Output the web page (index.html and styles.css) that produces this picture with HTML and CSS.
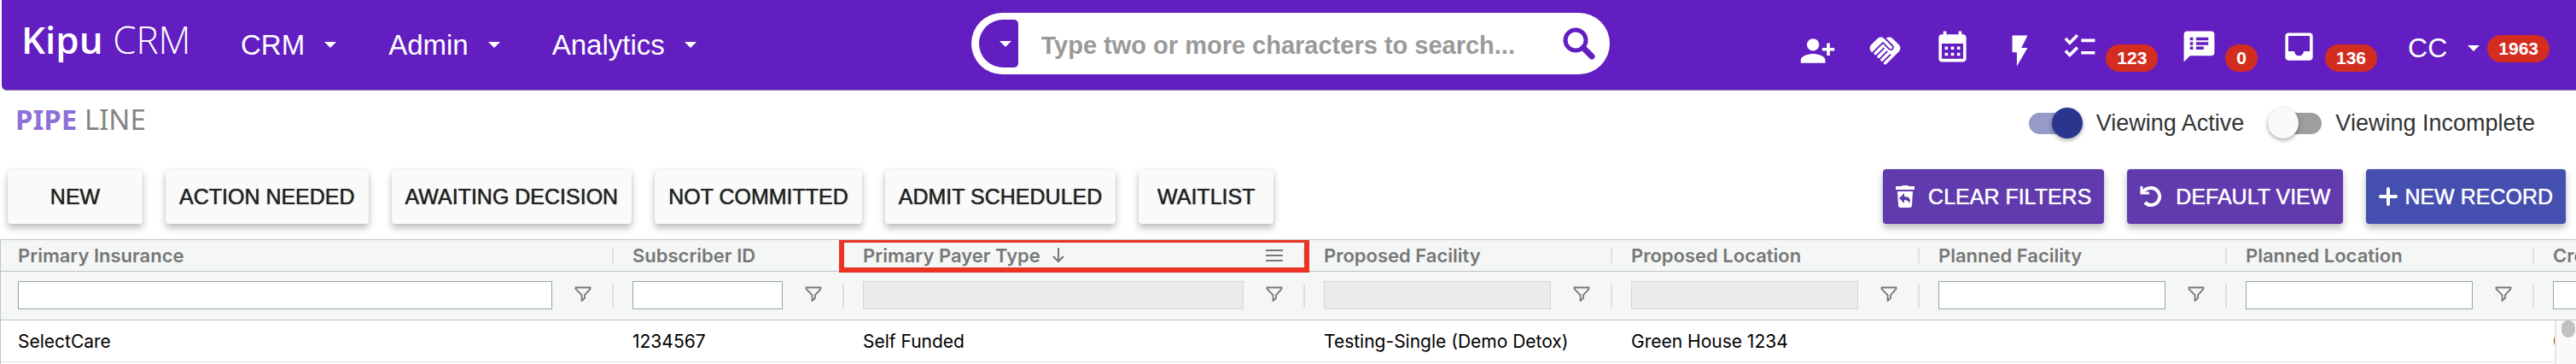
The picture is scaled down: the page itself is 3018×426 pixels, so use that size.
FILE: index.html
```html
<!DOCTYPE html>
<html lang="en">
<head>
    <meta charset="UTF-8">
    <meta name="viewport" content="width=device-width, initial-scale=1.0">
    <title>Kipu CRM - Pipeline</title>
    <link rel="stylesheet" href="styles.css">
</head>
<body>
    <svg class="sprite" aria-hidden="true">
        <symbol id="filter" viewBox="0 0 20 18">
            <path d="M1.5 1.5h17v1.6L12 10.4v3.4L8.6 17v-6.6L1.5 3.1z" fill="none" stroke="currentColor" stroke-width="1.8"/>
        </symbol>
    </svg>

    <header class="topbar">
        <div class="brand">
            <a class="logo" href="#"><b>Kipu</b> CRM</a>
            <nav class="menu">
                <button class="menu-btn">CRM <span class="caret"></span></button>
                <button class="menu-btn">Admin <span class="caret"></span></button>
                <button class="menu-btn">Analytics <span class="caret"></span></button>
            </nav>
        </div>

        <form class="search">
            <button class="search-scope" type="button" aria-label="Search scope"><span class="caret"></span></button>
            <input class="search-input" type="text" aria-label="Search" placeholder="Type two or more characters to search...">
            <button class="search-go" type="button" aria-label="Run search">
                <svg width="38" height="38" viewBox="0 0 38 38" fill="none" stroke="currentColor">
                    <circle cx="15" cy="15" r="12" stroke-width="5"/>
                    <path d="M24 24l10 10" stroke-width="7" stroke-linecap="round"/>
                </svg>
            </button>
        </form>

        <div class="tools">
            <button class="tool low" aria-label="Add person">
                <svg class="icon" viewBox="0 0 24 24"><path d="M13 8c0-2.21-1.79-4-4-4S5 5.79 5 8s1.79 4 4 4 4-1.79 4-4zm2 2v2h3v3h2v-3h3v-2h-3V7h-2v3h-3zM1 18v2h16v-2c0-2.66-5.33-4-8-4s-8 1.34-8 4z"/></svg>
            </button>
            <button class="tool low" aria-label="Referrals">
                <svg class="icon" viewBox="0 0 24 24"><path d="M16.48 10.41c-.39.39-1.04.39-1.43 0l-4.47-4.46-7.05 7.04-.66-.63c-1.17-1.17-1.17-3.07 0-4.24l4.24-4.24c1.17-1.17 3.07-1.17 4.24 0L16.48 9c.39.39.39 1.02 0 1.41zm.7-2.12c.78.78.78 2.05 0 2.83-1.27 1.27-2.61.22-2.83 0l-3.76-3.76-5.57 5.57c-.39.39-.39 1.02 0 1.41.39.39 1.02.39 1.42 0l4.62-4.62.71.71-4.62 4.62c-.39.39-.39 1.02 0 1.41.39.39 1.02.39 1.42 0l4.62-4.62.71.71-4.62 4.62c-.39.39-.39 1.02 0 1.41.39.39 1.02.39 1.41 0l4.62-4.62.71.71-4.62 4.62c-.39.39-.39 1.02 0 1.41.39.39 1.02.39 1.41 0l8.32-8.34c1.17-1.17 1.17-3.07 0-4.24l-4.24-4.24c-1.15-1.15-3.01-1.17-4.18-.06l4.47 4.47z"/></svg>
            </button>
            <button class="tool" aria-label="Calendar">
                <svg class="icon" viewBox="0 0 24 24"><path d="M19 4h-1V2h-2v2H8V2H6v2H5c-1.11 0-1.99.9-1.99 2L3 20a2 2 0 0 0 2 2h14c1.1 0 2-.9 2-2V6c0-1.1-.9-2-2-2zm0 16H5V10h14v10zM9 14H7v-2h2v2zm4 0h-2v-2h2v2zm4 0h-2v-2h2v2zm-8 4H7v-2h2v2zm4 0h-2v-2h2v2zm4 0h-2v-2h2v2z"/></svg>
            </button>
            <button class="tool low" aria-label="Quick actions">
                <svg class="icon" viewBox="0 0 24 24"><path d="M7 2v11h3v9l7-12h-4l4-8z"/></svg>
            </button>
            <button class="tool counted" aria-label="Tasks">
                <svg class="icon" viewBox="0 0 24 24"><path d="M22 7h-9v2h9V7zm0 8h-9v2h9v-2zM5.54 11 2 7.46l1.41-1.41 2.12 2.12 4.24-4.24 1.41 1.41L5.54 11zm0 8L2 15.46l1.41-1.41 2.12 2.12 4.24-4.24 1.41 1.41L5.54 19z"/></svg>
                <span class="badge">123</span>
            </button>
            <button class="tool counted" aria-label="Messages">
                <svg class="icon" viewBox="0 0 24 24"><path d="M20 2H4c-1.1 0-1.99.9-1.99 2L2 22l4-4h14c1.1 0 2-.9 2-2V4c0-1.1-.9-2-2-2zM8 14H6v-2h2v2zm0-3H6V9h2v2zm0-3H6V6h2v2zm7 6h-5v-2h5v2zm3-3h-8V9h8v2zm0-3h-8V6h8v2z"/></svg>
                <span class="badge">0</span>
            </button>
            <button class="tool counted" aria-label="Inbox">
                <svg class="icon" viewBox="0 0 24 24"><path d="M19 3H4.99c-1.11 0-1.98.89-1.98 2L3 19c0 1.1.88 2 1.99 2H19c1.1 0 2-.9 2-2V5c0-1.11-.9-2-2-2zm0 12h-4c0 1.66-1.35 3-3 3s-3-1.34-3-3H4.99V5H19v10z"/></svg>
                <span class="badge">136</span>
            </button>
            <button class="user">CC <span class="caret"></span><span class="badge">1963</span></button>
        </div>
    </header>

    <main>
        <div class="title-row">
            <h1><b>PIPE</b> LINE</h1>
            <div class="switches">
                <label class="switch"><input type="checkbox" checked>Viewing Active</label>
                <label class="switch"><input type="checkbox">Viewing Incomplete</label>
            </div>
        </div>

        <div class="actions">
            <div class="action-group">
                <button class="btn">NEW</button>
                <button class="btn">ACTION NEEDED</button>
                <button class="btn">AWAITING DECISION</button>
                <button class="btn">NOT COMMITTED</button>
                <button class="btn">ADMIT SCHEDULED</button>
                <button class="btn">WAITLIST</button>
            </div>
            <div class="action-group">
                <button class="btn purple">
                    <svg width="22" height="26" viewBox="0 0 22 26" fill="currentColor"><path d="M7 1q0-1 1-1h6q1 0 1 1h7v4H0V1zM2 7h18l-1 16q0 3-3 3H6q-3 0-3-3z"/><path d="M10 9v4c6 0 8 3 6 8-1-3-3-4-6-4v4l-6-6z" fill="#613bae"/></svg>
                    CLEAR FILTERS
                </button>
                <button class="btn purple">
                    <svg width="26" height="26" viewBox="0 0 26 26" fill="none" stroke="currentColor" stroke-width="4"><path d="M2 1v8h9" stroke-width="3"/><path d="M3 9C5 5 9 3 13 3a10 10 0 1 1-7 17"/></svg>
                    DEFAULT VIEW
                </button>
                <button class="btn blue">
                    <svg width="22" height="22" viewBox="0 0 22 22" stroke="currentColor" stroke-width="4" stroke-linecap="round"><path d="M11 2v18M2 11h18"/></svg>
                    NEW RECORD
                </button>
            </div>
        </div>

        <div class="grid">
            <table>
                <colgroup>
                    <col class="col-insurance">
                    <col class="col-id">
                    <col class="col-payer">
                    <col span="5">
                </colgroup>
                <thead>
                    <tr class="heads">
                        <th>Primary Insurance</th>
                        <th>Subscriber ID</th>
                        <th class="marked">
                            <div class="sorted">
                                Primary Payer Type
                                <svg width="16" height="18" viewBox="0 0 16 18" fill="none" stroke="currentColor" stroke-width="2"><path d="M8 0v16M2 10l6 6 6-6"/></svg>
                                <button class="col-menu" aria-label="Column menu">
                                    <svg width="20" height="14" viewBox="0 0 20 14" stroke="currentColor" stroke-width="2"><path d="M0 1h20M0 7h20M0 13h20"/></svg>
                                </button>
                            </div>
                        </th>
                        <th>Proposed Facility</th>
                        <th>Proposed Location</th>
                        <th>Planned Facility</th>
                        <th>Planned Location</th>
                        <th>Created</th>
                    </tr>
                    <tr class="filters">
                        <td><div class="filter"><input type="text" aria-label="Primary Insurance filter"><button aria-label="Filter menu"><svg><use href="#filter"/></svg></button></div></td>
                        <td><div class="filter"><input type="text" aria-label="Subscriber ID filter"><button aria-label="Filter menu"><svg><use href="#filter"/></svg></button></div></td>
                        <td><div class="filter"><input type="text" aria-label="Primary Payer Type filter" disabled><button aria-label="Filter menu"><svg><use href="#filter"/></svg></button></div></td>
                        <td><div class="filter"><input type="text" aria-label="Proposed Facility filter" disabled><button aria-label="Filter menu"><svg><use href="#filter"/></svg></button></div></td>
                        <td><div class="filter"><input type="text" aria-label="Proposed Location filter" disabled><button aria-label="Filter menu"><svg><use href="#filter"/></svg></button></div></td>
                        <td><div class="filter"><input type="text" aria-label="Planned Facility filter"><button aria-label="Filter menu"><svg><use href="#filter"/></svg></button></div></td>
                        <td><div class="filter"><input type="text" aria-label="Planned Location filter"><button aria-label="Filter menu"><svg><use href="#filter"/></svg></button></div></td>
                        <td><div class="filter"><input type="text" aria-label="Created filter"><button aria-label="Filter menu"><svg><use href="#filter"/></svg></button></div></td>
                    </tr>
                </thead>
                <tbody>
                    <tr>
                        <td>SelectCare</td>
                        <td>1234567</td>
                        <td>Self Funded</td>
                        <td>Testing-Single (Demo Detox)</td>
                        <td>Green House 1234</td>
                        <td></td>
                        <td></td>
                        <td>0</td>
                    </tr>
                </tbody>
            </table>
            <div class="scrollbar"><div class="thumb"></div></div>
        </div>
    </main>
</body>
</html>
```
FILE: styles.css
```css
* {
    box-sizing: border-box;
}
body {
    margin: 0;
    min-height: 100vh;
    overflow: hidden;
    background: #fff;
    color: #333;
    font-family: "Liberation Sans", Arial, sans-serif;
}
button {
    background: none;
    border: 0;
    padding: 0;
    color: inherit;
    font: inherit;
    cursor: pointer;
}
svg {
    display: block;
    flex: none;
}
.sprite {
    position: absolute;
    width: 0;
    height: 0;
}

/* top bar */
.topbar {
    display: grid;
    grid-template-columns: 1fr auto 1fr;
    align-items: center;
    height: 106px;
    margin-left: 2px;
    padding: 0 31px 0 23px;
    background: #621ec1;
    border-bottom: 1px solid #8a7d9c;
    border-radius: 0 0 0 6px;
    color: #fff;
}
.brand {
    display: flex;
    align-items: center;
}
.logo {
    width: 200px;
    margin-bottom: 14px;
    color: #fff;
    font: 300 44px/64px "Open Sans", sans-serif;
    text-decoration: none;
    white-space: nowrap;
}
.logo b {
    font-weight: 600;
}
.menu {
    display: flex;
    gap: 61px;
    margin-left: 57px;
    font-size: 33px;
}
.menu-btn {
    display: flex;
    align-items: center;
    gap: 23px;
}
.caret {
    border: 7px solid transparent;
    border-top-color: currentColor;
    border-bottom: 0;
}
.search {
    display: flex;
    align-items: center;
    width: 748px;
    height: 72px;
    margin: 0 0 3px 11px;
    padding: 0 17px 0 9px;
    background: #fff;
    border-radius: 36px;
    color: #621ec1;
}
.search-scope {
    width: 46px;
    height: 56px;
    padding-left: 24px;
    background: #621ec1;
    border-radius: 28px 5px 5px 28px;
    color: #fff;
}
.search-scope .caret {
    display: block;
    width: 14px;
}
.search-input {
    flex: 1;
    min-width: 0;
    margin-left: 27px;
    padding: 4px 0 0;
    border: 0;
    outline: 0;
    color: #333;
    font: bold 29px "Liberation Sans", Arial, sans-serif;
}
.search-input::placeholder {
    color: #999;
    opacity: 1;
}
.tools {
    display: flex;
    align-items: flex-start;
    align-self: flex-start;
    justify-content: flex-end;
    padding-top: 33px;
    gap: 36px;
}
.tool {
    display: flex;
}
.low {
    margin-top: 5px;
}
.counted {
    gap: 9px;
    margin-left: -9px;
}
.icon {
    width: 43px;
    height: 43px;
    fill: currentColor;
}
.badge {
    padding: 0 13px;
    background: #d32d20;
    border-radius: 16px;
    color: #fff;
    font-size: 21px;
    font-weight: bold;
    line-height: 32px;
}
.tool .badge {
    margin-top: 19px;
}
.user {
    display: flex;
    align-items: center;
    margin-top: 5px;
    font-size: 32px;
}
.user .caret {
    margin: 0 9px 0 24px;
}

/* title and switches */
.title-row {
    display: flex;
    justify-content: space-between;
    align-items: center;
    height: 76px;
    padding: 0 48px 0 18px;
}
h1 {
    margin: 0 0 8px;
    color: #848484;
    font: 400 33px/40px "Noto Sans", sans-serif;
}
h1 b {
    color: #8e70d6;
}
.switches {
    display: flex;
    gap: 28px;
    font-size: 27px;
}
.switch {
    display: flex;
    align-items: center;
    gap: 16px;
}
.switch input {
    appearance: none;
    display: flex;
    align-items: center;
    width: 63px;
    height: 25px;
    margin: 0;
    background: #9e9e9e;
    border-radius: 13px;
}
.switch input::before {
    content: "";
    width: 36px;
    height: 36px;
    border-radius: 50%;
    background: #fafafa;
    box-shadow: 0 2px 5px rgba(0, 0, 0, 0.35);
}
.switch input:checked {
    justify-content: flex-end;
    background: #959ac6;
}
.switch input:checked::before {
    background: #2a358d;
}

/* action buttons */
.actions {
    display: flex;
    justify-content: space-between;
    padding: 16px 12px 18px 9px;
}
.action-group {
    display: flex;
    gap: 27px;
}
.btn {
    display: flex;
    align-items: center;
    justify-content: center;
    gap: 16px;
    min-width: 158px;
    height: 64px;
    padding: 0 16px;
    background: #fafafa;
    border-radius: 4px;
    box-shadow: 0 5px 9px rgba(0, 0, 0, 0.25), 0 0 3px rgba(0, 0, 0, 0.08);
    color: #222;
    font-size: 25px;
    text-shadow: 0 0 1px currentColor;
    white-space: nowrap;
}
.purple {
    padding: 0 15px;
    background: #613bae;
    color: #fff;
}
.blue {
    gap: 8px;
    padding: 0 15px;
    background: #444fb0;
    color: #fff;
}

/* pipeline table */
.grid {
    position: relative;
    overflow: hidden;
    border-top: 1px solid #bdc3c7;
    border-left: 1px solid #bdc3c7;
    height: 146px;
    background: #fcfcfc;
    font: 21px Inter, sans-serif;
    color: #000;
}
table {
    width: 3329px;
    table-layout: fixed;
    border-collapse: separate;
    border-spacing: 0;
}
col {
    width: 360px;
}
.col-insurance {
    width: 719px;
}
.col-id {
    width: 270px;
}
.col-payer {
    width: 540px;
}
th,
td {
    padding: 0 0 0 21px;
    text-align: left;
    white-space: nowrap;
}
th:first-child,
td:first-child {
    padding-left: 20px;
}
thead th,
thead td {
    background: linear-gradient(#dcdfe1, #dcdfe1) right 1px center / 2px 50% no-repeat #f5f7f7;
    border-bottom: 1px solid #bdc3c7;
}
th {
    height: 37px;
    color: #767878;
    font-size: 22px;
    font-weight: 600;
}
.filters td {
    height: 57px;
    padding-bottom: 2px;
    color: #767878;
}
.marked {
    position: relative;
}
.marked::after {
    content: "";
    position: absolute;
    inset: -3px -4px -2px -7px;
    border: 6px solid #eb3323;
    pointer-events: none;
}
.sorted {
    display: flex;
    align-items: center;
    gap: 13px;
    padding-right: 27px;
}
.col-menu {
    margin-left: auto;
}
.filter {
    display: flex;
    align-items: center;
    justify-content: space-between;
    gap: 26px;
    padding-right: 27px;
}
.filter input {
    flex: 1;
    min-width: 0;
    height: 33px;
    border: 1px solid #95a5a6;
    background: #fff;
}
.filter input:disabled {
    background: #ebebeb;
    border-color: #d3d6d7;
}
.filter svg {
    width: 20px;
    height: 18px;
    margin-bottom: 3px;
}
tbody td {
    height: 49px;
    background: #fff;
    border-bottom: 1px solid #e2e4e5;
}
.scrollbar {
    position: absolute;
    top: 94px;
    right: 0;
    bottom: 0;
    width: 25px;
    padding-left: 6px;
    background: #fafafa;
    border-left: 2px solid #e6e6e6;
}
.thumb {
    width: 16px;
    height: 20px;
    background: #c1c1c1;
    border-radius: 8px;
}
```
